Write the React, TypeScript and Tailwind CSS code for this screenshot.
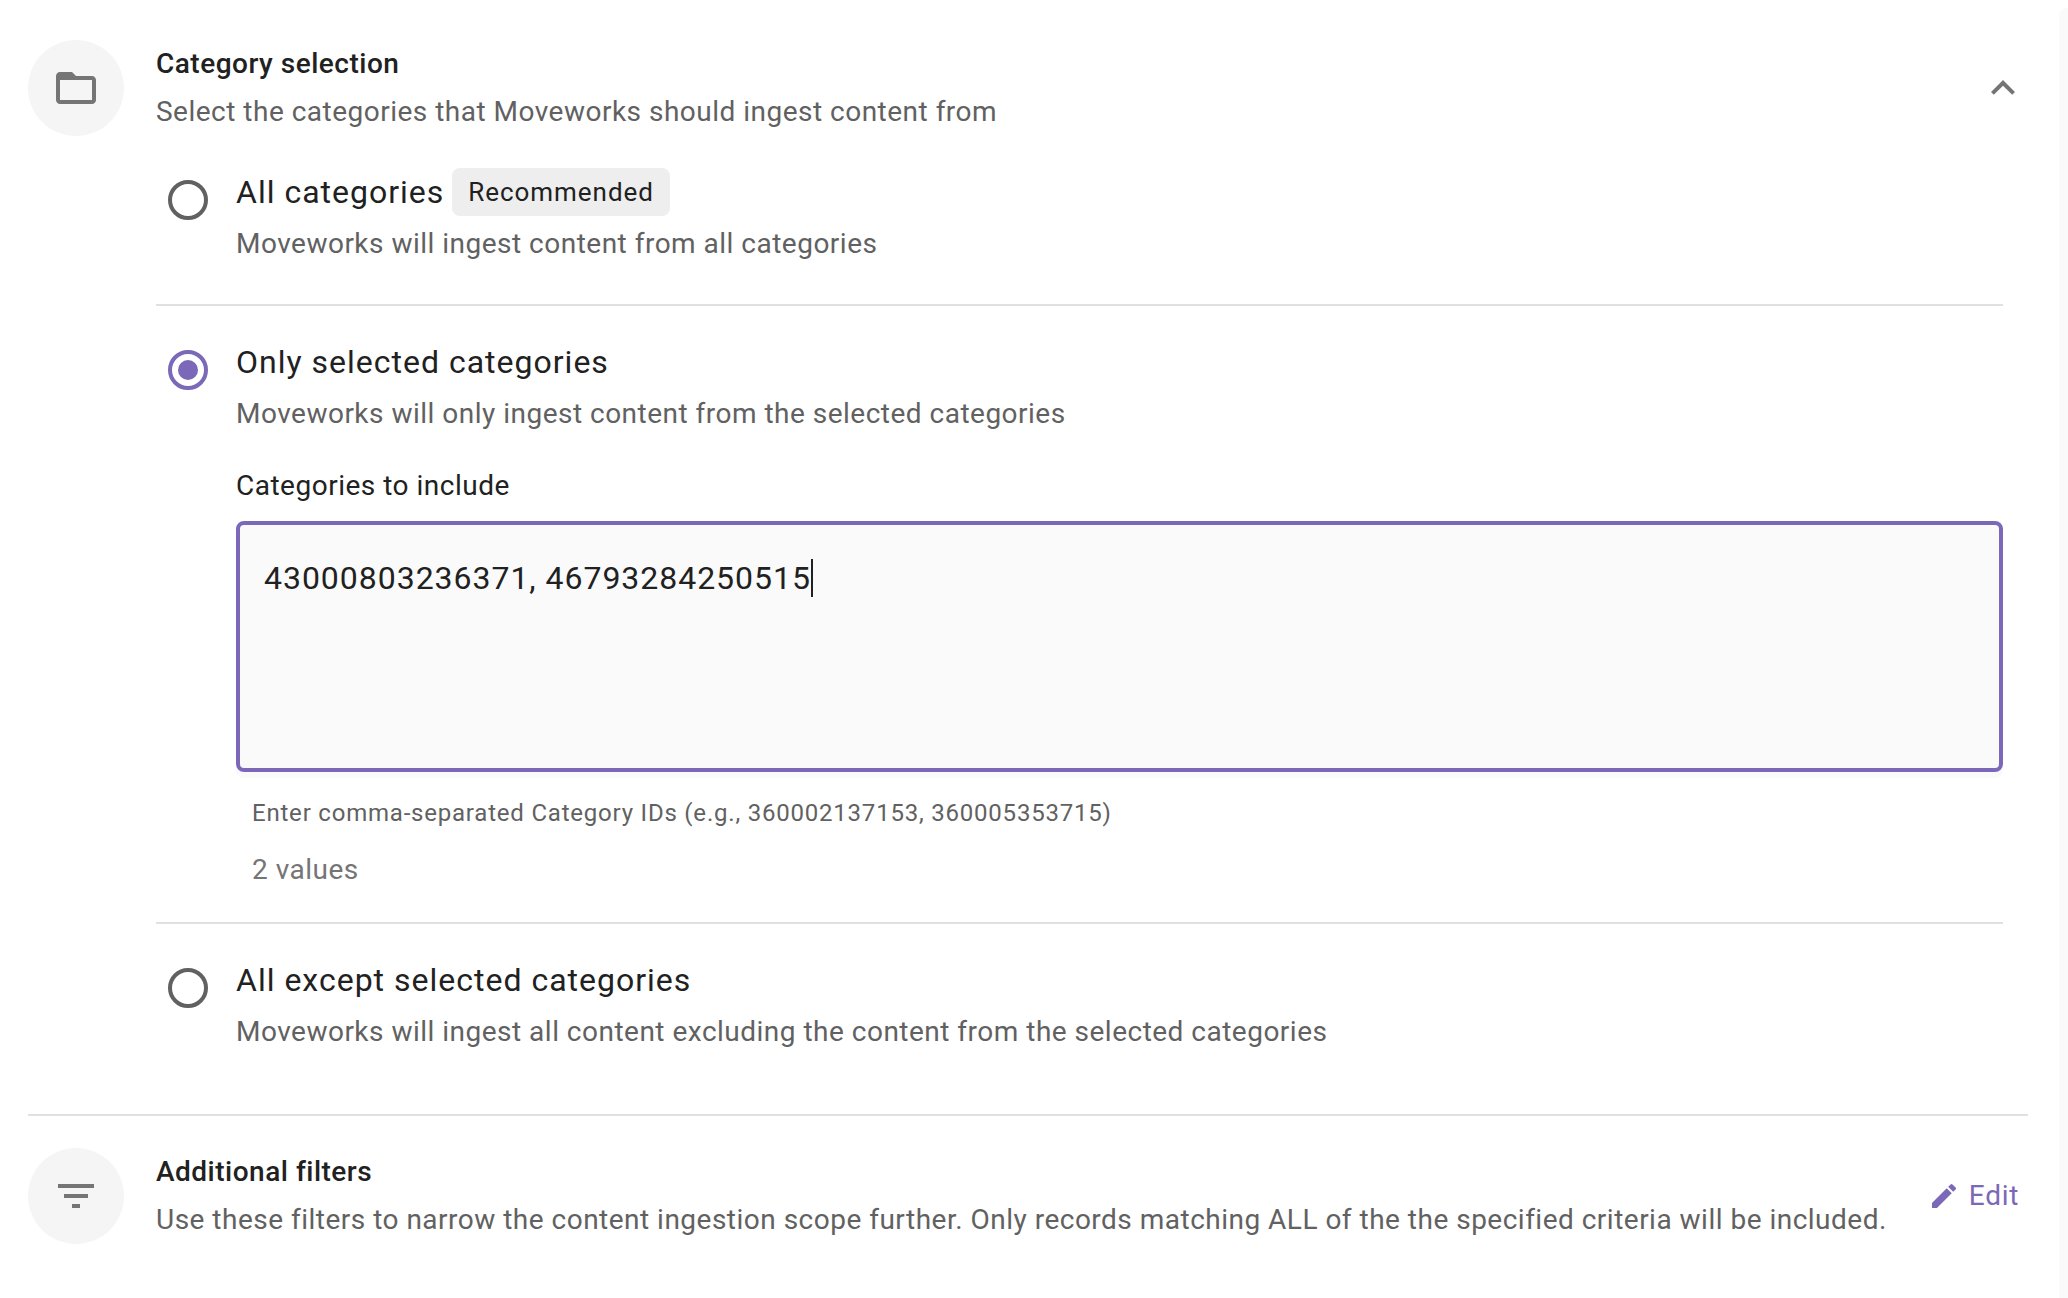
import React from 'react';

const Radio: React.FC<{ checked?: boolean }> = ({ checked }) => (
  <div
    className={`w-[40px] h-[40px] mt-[12px] ml-[12px] mr-[28px] shrink-0 rounded-full border-[4px] flex items-center justify-center ${
      checked ? 'border-[#7b68b8]' : 'border-[#616161]'
    }`}
  >
    {checked && <div className="w-[20px] h-[20px] rounded-full bg-[#7b68b8]"></div>}
  </div>
);

const IconCircle: React.FC<{ children: React.ReactNode }> = ({ children }) => (
  <div className="w-[96px] h-[96px] shrink-0 rounded-full bg-[#f5f5f5] flex items-center justify-center">{children}</div>
);

const App: React.FC = () => {
  return (
    <div className="flex h-[1298px] overflow-hidden bg-white text-[#212121] font-['Roboto',sans-serif]">
      <main className="flex-1 pl-[28px] pr-[31px]">
        {/* Category selection */}
        <header className="flex items-center gap-[32px] pt-[40px]">
          <IconCircle>
            <svg width="48" height="48" viewBox="0 0 24 24" fill="#757575">
              <path d="M20 6h-8l-2-2H4c-1.1 0-1.99.9-1.99 2L2 18c0 1.1.9 2 2 2h16c1.1 0 2-.9 2-2V8c0-1.1-.9-2-2-2zm0 12H4V8h16v10z" />
            </svg>
          </IconCircle>
          <div className="flex-1">
            <h2 className="text-[28px] leading-[48px] font-medium tracking-[0.5px]">Category selection</h2>
            <p className="text-[28px] leading-[48px] tracking-[0.49px] text-[#616161]">
              Select the categories that Moveworks should ingest content from
            </p>
          </div>
          <svg className="mr-[1px]" width="48" height="48" viewBox="0 0 24 24" fill="#757575">
            <path d="M12 8l-6 6 1.41 1.41L12 10.83l4.59 4.58L18 14z" />
          </svg>
        </header>

        <div className="ml-[128px] mr-[25px]">
          {/* All categories */}
          <section className="flex pt-[32px] pb-[36px] border-b-2 border-[#e0e0e0]">
            <Radio />
            <div>
              <div className="flex items-center gap-[8px] h-[48px]">
                <span className="text-[32px] tracking-[1px]">All categories</span>
                <span className="h-[48px] px-[16px] rounded-[8px] bg-[#eeeeee] text-[26px] tracking-[0.95px] leading-[48px]">Recommended</span>
              </div>
              <p className="text-[28px] leading-[48px] mt-[4px] tracking-[0.49px] text-[#616161]">
                Moveworks will ingest content from all categories
              </p>
            </div>
          </section>

          {/* Only selected categories */}
          <section className="flex pt-[32px] pb-[32px] border-b-2 border-[#e0e0e0]">
            <Radio checked />
            <div className="flex-1">
              <div className="text-[32px] leading-[48px] tracking-[1px]">Only selected categories</div>
              <p className="text-[28px] leading-[48px] mt-[4px] tracking-[0.49px] text-[#616161]">
                Moveworks will only ingest content from the selected categories
              </p>
              <label className="block text-[28px] leading-[40px] mt-[28px] tracking-[0.5px]">Categories to include</label>
              <div className="h-[251px] mt-[15px] rounded-[8px] border-[4px] border-[#7b68b8] bg-[#fafafa] px-[24px] pt-[29px] shadow-[0_6px_0_#fafafa]">
                <div className="flex items-center h-[48px] text-[32px] tracking-[0.97px]">
                  43000803236371, 46793284250515
                  <span className="w-[2px] h-[38px] bg-[#212121]"></span>
                </div>
              </div>
              <div className="px-[16px] pt-[23px]">
                <p className="text-[24px] leading-[36px] tracking-[0.79px] text-[#616161]">
                  Enter comma-separated Category IDs (e.g., 360002137153, 360005353715)
                </p>
                <p className="text-[28px] leading-[40px] mt-[19px] tracking-[0.5px] text-[#757575]">2 values</p>
              </div>
            </div>
          </section>

          {/* All except selected categories */}
          <section className="flex pt-[32px] pb-[58px]">
            <Radio />
            <div>
              <div className="text-[32px] leading-[48px] tracking-[1px]">All except selected categories</div>
              <p className="text-[28px] leading-[48px] mt-[4px] tracking-[0.49px] text-[#616161]">
                Moveworks will ingest all content excluding the content from the selected categories
              </p>
            </div>
          </section>
        </div>

        {/* Additional filters */}
        <div className="flex items-center gap-[32px] border-t-2 border-[#e0e0e0] pt-[32px]">
          <IconCircle>
            <svg width="48" height="48" viewBox="0 0 24 24" fill="#757575">
              <path d="M10 18h4v-2h-4v2zM3 6v2h18V6H3zm3 7h12v-2H6v2z" />
            </svg>
          </IconCircle>
          <div className="flex-1">
            <h2 className="text-[28px] leading-[48px] font-medium tracking-[0.5px]">Additional filters</h2>
            <p className="text-[28px] leading-[48px] tracking-[0.49px] text-[#616161] whitespace-nowrap">
              Use these filters to narrow the content ingestion scope further. Only records matching ALL of the the specified criteria will be included.
            </p>
          </div>
          <button className="flex items-center gap-[9px] pr-[9px] text-[#7b68b8] text-[28px] tracking-[0.7px]">
            <svg width="32" height="32" viewBox="0 0 24 24" fill="#7b68b8">
              <path d="M3 17.25V21h3.75L17.81 9.94l-3.75-3.75L3 17.25zM20.71 7.04a.996.996 0 0 0 0-1.41l-2.34-2.34a.996.996 0 0 0-1.41 0l-1.83 1.83 3.75 3.75 1.83-1.83z" />
            </svg>
            Edit
          </button>
        </div>
      </main>
      <div className="w-[9px] mt-[8px] rounded-tl-[8px] bg-[#fafafa]"></div>
    </div>
  );
};

export default App;
